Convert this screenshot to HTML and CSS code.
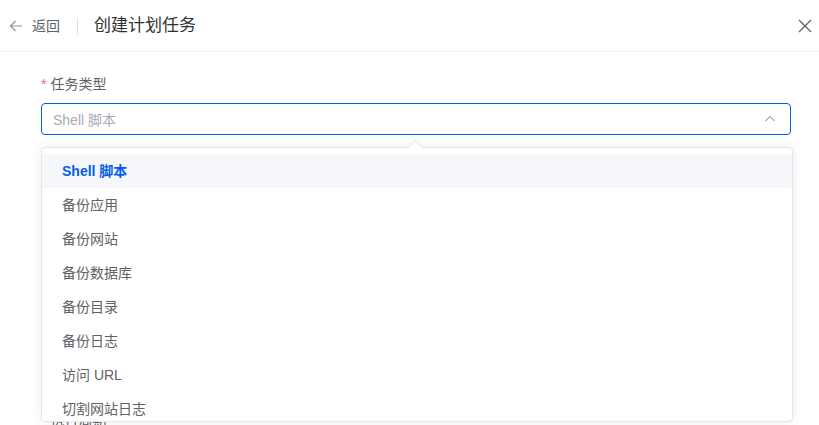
FILE: index.html
```html
<!DOCTYPE html>
<html lang="zh-CN">
<head>
<meta charset="utf-8">
<title>创建计划任务</title>
<link rel="stylesheet" href="styles.css">
</head>
<body>
<div class="drawer">
  <header class="header">
    <div class="back">
      <svg class="back-icon" width="14" height="14" viewBox="0 0 14 14"><path d="M13 7H1.5M6.5 2L1.5 7L6.5 12" fill="none" stroke="#909399" stroke-width="1.2"/></svg>
      <span class="back-text">返回</span>
    </div>
    <span class="divider"></span>
    <span class="title">创建计划任务</span>
    <svg class="close" width="14" height="14" viewBox="0 0 14 14"><path d="M1 1L13 13M13 1L1 13" fill="none" stroke="#606266" stroke-width="1.3"/></svg>
  </header>
  <form class="form">
    <div class="item">
      <label class="label"><span class="req">*</span>任务类型</label>
      <div class="select">
        <span class="placeholder">Shell 脚本</span>
        <svg class="chev" width="12" height="12" viewBox="0 0 12 12"><path d="M1.5 8L6 3.5L10.5 8" fill="none" stroke="#a8abb2" stroke-width="1.1"/></svg>
      </div>
    </div>
    <div class="item">
      <div class="label-space"></div>
      <div class="input"></div>
    </div>
    <div class="item">
      <div class="label-space"></div>
      <div class="input tall"></div>
    </div>
    <div class="item">
      <label class="label"><span class="req">*</span>执行周期</label>
      <div class="input"></div>
    </div>
  </form>
  <div class="popper">
    <span class="arrow"></span>
    <ul class="options">
      <li class="option selected">Shell 脚本</li>
      <li class="option">备份应用</li>
      <li class="option">备份网站</li>
      <li class="option">备份数据库</li>
      <li class="option">备份目录</li>
      <li class="option">备份日志</li>
      <li class="option">访问 URL</li>
      <li class="option">切割网站日志</li>
    </ul>
  </div>
</div>
</body>
</html>
```
FILE: styles.css
```css
html, body {
  margin: 0;
  padding: 0;
  background: #fff;
  overflow: hidden;
}
body {
  font-family: "Liberation Sans", "Noto Sans CJK SC", sans-serif;
  width: 819px;
  height: 425px;
}
.drawer {
  position: relative;
  width: 819px;
  height: 425px;
  overflow: hidden;
}
.header {
  display: flex;
  align-items: center;
  height: 52px;
  border-bottom: 1px solid #ebeef5;
  padding: 0 4px 0 9px;
  box-sizing: border-box;
}
.back {
  display: flex;
  align-items: center;
  gap: 9px;
}
.back-icon {
  display: block;
}
.back-text {
  font-size: 14px;
  color: #606266;
  line-height: 20px;
}
.divider {
  width: 1px;
  height: 16px;
  background: #dcdfe6;
  margin: 0 16px 0 17px;
}
.title {
  font-size: 17px;
  color: #303133;
  line-height: 24px;
  flex: 1;
}
.close {
  display: block;
  margin-right: 3px;
}
.form {
  padding: 21px 28px 0 41px;
}
.item {
  margin-bottom: 18px;
}
.label {
  display: block;
  font-size: 14px;
  line-height: 22px;
  color: #606266;
  margin-bottom: 8px;
}
.label-space {
  height: 22px;
  margin-bottom: 8px;
}
.req {
  color: #f56c6c;
  margin-right: 4px;
}
.select, .input {
  height: 32px;
  box-sizing: border-box;
  border: 1px solid #dcdfe6;
  border-radius: 4px;
  display: flex;
  align-items: center;
  padding: 0 11px;
}
.select {
  border-color: #005eeb;
  justify-content: space-between;
}
.placeholder {
  font-size: 14px;
  color: #a8abb2;
}
.chev {
  display: block;
  margin-right: 3px;
}
.input.tall {
  height: 128px;
}
.popper {
  position: absolute;
  left: 41px;
  top: 147px;
  width: 752px;
  height: 275px;
  box-sizing: border-box;
  background: #fff;
  border: 1px solid #e4e7ed;
  border-radius: 4px;
  box-shadow: 0 0 12px rgba(0, 0, 0, 0.08);
}
.arrow {
  position: absolute;
  left: 368px;
  top: -6px;
  width: 10px;
  height: 10px;
  background: #fff;
  border-left: 1px solid #e4e7ed;
  border-top: 1px solid #e4e7ed;
  transform: rotate(45deg);
}
.options {
  list-style: none;
  margin: 0;
  padding: 6px 0;
}
.option {
  height: 34px;
  line-height: 34px;
  padding: 0 20px;
  font-size: 14px;
  color: #606266;
}
.option.selected {
  background: #f5f7fa;
  color: #005eeb;
  font-weight: bold;
}
```
